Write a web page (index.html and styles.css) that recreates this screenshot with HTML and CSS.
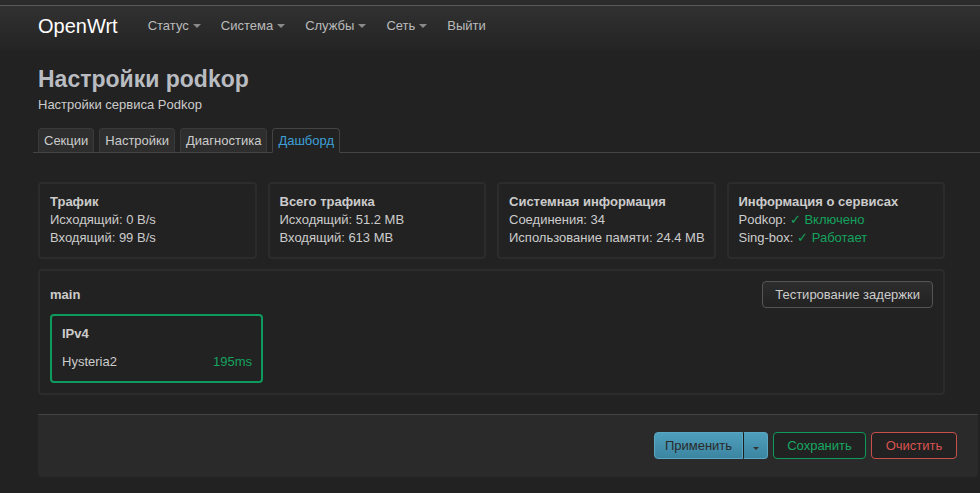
FILE: index.html
```html
<!DOCTYPE html>
<html lang="ru">
<head>
  <meta charset="UTF-8">
  <meta name="viewport" content="width=device-width, initial-scale=1.0">
  <title>Настройки podkop - OpenWrt</title>
  <link rel="stylesheet" href="styles.css">
</head>
<body>
  <div class="topstrip"></div>
  <header class="navbar">
    <a class="brand" href="#">OpenWrt</a>
    <ul class="nav">
      <li><a href="#">Статус<span class="caret"></span></a></li>
      <li><a href="#">Система<span class="caret"></span></a></li>
      <li><a href="#">Службы<span class="caret"></span></a></li>
      <li><a href="#">Сеть<span class="caret"></span></a></li>
      <li><a href="#">Выйти</a></li>
    </ul>
  </header>

  <div class="maincontent">
    <h2 class="page-title">Настройки podkop</h2>
    <div class="page-desc">Настройки сервиса Podkop</div>

    <ul class="tabs">
      <li><a href="#">Секции</a></li>
      <li><a href="#">Настройки</a></li>
      <li><a href="#">Диагностика</a></li>
      <li class="active"><a href="#">Дашборд</a></li>
    </ul>

    <div class="dashboard">
      <div class="stats">
        <div class="stat-card">
          <div class="stat-title">Трафик</div>
          <div>Исходящий: 0 B/s</div>
          <div>Входящий: 99 B/s</div>
        </div>
        <div class="stat-card">
          <div class="stat-title">Всего трафика</div>
          <div>Исходящий: 51.2 MB</div>
          <div>Входящий: 613 MB</div>
        </div>
        <div class="stat-card">
          <div class="stat-title">Системная информация</div>
          <div>Соединения: 34</div>
          <div>Использование памяти: 24.4 MB</div>
        </div>
        <div class="stat-card">
          <div class="stat-title">Информация о сервисах</div>
          <div>Podkop: <span class="ok">✓ Включено</span></div>
          <div>Sing-box: <span class="ok">✓ Работает</span></div>
        </div>
      </div>

      <div class="section">
        <div class="section-head">
          <span class="section-name">main</span>
          <button class="btn">Тестирование задержки</button>
        </div>
        <div class="outbounds">
          <div class="outbound active">
            <div class="outbound-title">IPv4</div>
            <div class="outbound-row">
              <span>Hysteria2</span>
              <span class="latency">195ms</span>
            </div>
          </div>
        </div>
      </div>
    </div>

    <div class="page-actions">
      <div class="btn-split">
        <button class="btn-apply">Применить</button>
        <button class="btn-apply btn-drop"><span class="caret dark"></span></button>
      </div>
      <button class="btn btn-save">Сохранить</button>
      <button class="btn btn-reset">Очистить</button>
    </div>
  </div>
</body>
</html>
```

FILE: styles.css
```css
body {
  margin: 0;
  padding: 0;
  font-family: 'Liberation Sans', Arial, sans-serif;
  font-size: 13px;
  line-height: 18px;
  color: #ccc;
  background-color: #222;
  overflow: hidden;
}

a {
  color: inherit;
  text-decoration: none;
}

ul {
  list-style: none;
  margin: 0;
  padding: 0;
}

/* Barra superior */
.topstrip {
  height: 5px;
  background: #2b2b2b;
}

.navbar {
  display: flex;
  align-items: center;
  height: 40px;
  padding: 0 0 4px 38px;
  border-top: 1px solid #585858;
  background: linear-gradient(#313131, #242424);
}

.brand {
  font-size: 20px;
  color: #fff;
  margin-right: 20px;
}

.nav {
  display: flex;
}

.nav a {
  display: flex;
  align-items: center;
  padding: 0 10px;
  color: #bbb;
}

.caret {
  display: inline-block;
  width: 0;
  height: 0;
  margin-left: 4px;
  border-left: 4px solid transparent;
  border-right: 4px solid transparent;
  border-top: 4px solid #8a8a8a;
}

.caret.dark {
  margin: 0;
  border-top-color: #333;
  border-left-width: 3px;
  border-right-width: 3px;
  border-top-width: 3px;
}

/* Contenido */
.maincontent {
  padding-left: 38px;
}

.page-title {
  margin: 0;
  padding-top: 14px;
  font-size: 23px;
  line-height: 30px;
  color: #b9bcc0;
}

.page-desc {
  margin-top: 2px;
}

.tabs {
  display: flex;
  margin: 14px 0 0 -5px;
  padding-left: 5px;
  border-bottom: 1px solid #444;
}

.tabs li {
  margin-right: 5px;
}

.tabs a {
  display: block;
  padding: 3px 5px 2px;
  margin-bottom: -1px;
  border: 1px solid #3a3a3a;
  border-bottom-color: #444;
  border-radius: 4px 4px 0 0;
  background: #2e2e2e;
  line-height: 18px;
}

.tabs .active a {
  background: #222;
  border-color: #444;
  border-bottom-color: #222;
  color: #3ea0d6;
}

.dashboard {
  width: 907px;
  padding-top: 29px;
}

.stats {
  display: grid;
  grid-template-columns: repeat(4, 1fr);
  gap: 11px;
}

.stat-card {
  padding: 9px 6px 10px 10px;
  border: 2px solid #2c2c2c;
  border-radius: 4px;
  white-space: nowrap;
}

.stat-title {
  font-weight: bold;
}

.ok {
  color: #14a35e;
}

.section {
  margin-top: 10px;
  padding: 10px;
  border: 2px solid #2c2c2c;
  border-radius: 4px;
}

.section-head {
  display: flex;
  justify-content: space-between;
  align-items: center;
}

.section-name {
  font-weight: bold;
}

.btn {
  font-family: inherit;
  font-size: 13px;
  height: 27px;
  padding: 0 12px;
  color: #ccc;
  background: linear-gradient(#2d2d2d, #222);
  border: 1px solid #555;
  border-radius: 4px;
}

.outbounds {
  display: flex;
  margin-top: 6px;
}

.outbound {
  width: 190px;
  padding: 9px 9px 10px 10px;
  border: 2px solid #2c2c2c;
  border-radius: 4px;
}

.outbound.active {
  border-color: #0d9a5c;
}

.outbound-title {
  font-weight: bold;
}

.outbound-row {
  display: flex;
  justify-content: space-between;
  margin-top: 10px;
}

.latency {
  color: #14a35e;
}

/* Botones de la página */
.page-actions {
  display: flex;
  justify-content: flex-end;
  gap: 5px;
  margin: 19px 2px 0 0;
  padding: 17px 21px 18px;
  border-top: 1px solid #444;
  border-radius: 0 0 4px 4px;
  background: #2a2a2a;
}

.btn-split {
  display: flex;
}

.btn-apply {
  font-family: inherit;
  font-size: 13px;
  height: 27px;
  width: 89px;
  padding: 0;
  color: #2a2a2a;
  background: linear-gradient(#4e9fbc, #3c85a1);
  border: 1px solid #5aa7c4;
  border-radius: 4px 0 0 4px;
}

.btn-drop {
  width: 25px;
  border-left: 1px solid #1d1d1d;
  border-radius: 0 4px 4px 0;
}

.btn-save {
  width: 93px;
  color: #17a862;
  background: #222;
  border-color: #0d9a5c;
}

.btn-reset {
  width: 86px;
  color: #d9534f;
  background: #222;
  border-color: #c9504a;
}
```
